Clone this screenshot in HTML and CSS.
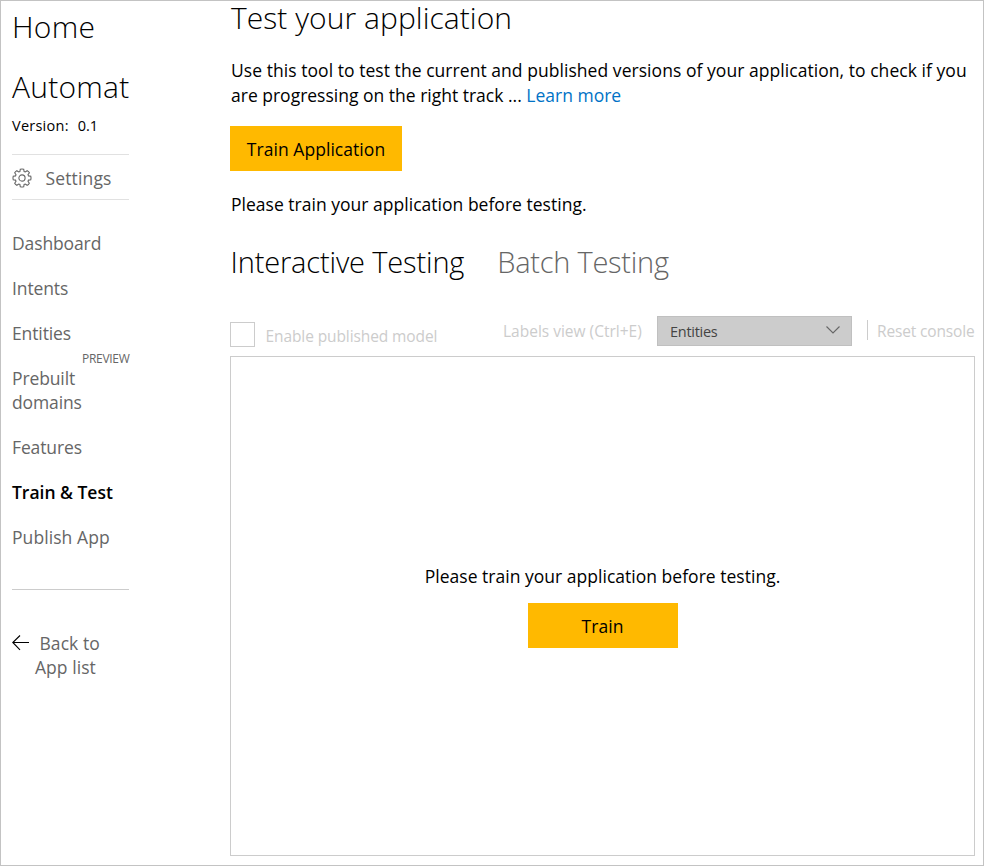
FILE: index.html
```html
<!DOCTYPE html>
<html lang="en">
<head>
<meta charset="utf-8">
<title>Train &amp; Test</title>
<link rel="stylesheet" href="styles.css">
</head>
<body>
<div class="app">
  <aside class="sidebar">
    <h1 class="app-name"><span>Home</span><br><span>Automat</span></h1>
    <p class="version"><span>Version:</span><span class="number">0.1</span></p>
    <a class="settings">
      <svg class="gear" viewBox="0 0 20 20" width="20" height="20"><path d="M8.300 1.200Q10 .7 11.700 1.200L12.100 3.500 13.300 4 15.200 2.700Q16.700 3.500 17.400 4.800L16 6.700 16.500 7.900 18.800 8.300Q19.300 10 18.800 11.700L16.500 12.100 16 13.300 17.300 15.200Q16.500 16.700 15.200 17.300L13.300 16 12.100 16.500 11.700 18.800Q10 19.300 8.300 18.800L7.900 16.500 6.700 16 4.800 17.300Q3.300 16.500 2.700 15.200L4 13.300 3.500 12.100 1.200 11.700Q.7 10 1.200 8.300L3.500 7.900 4 6.700 2.700 4.800Q3.500 3.300 4.800 2.700L6.700 4 7.900 3.500z"/><circle cx="10" cy="10" r="3.100"/></svg>
      <span>Settings</span>
    </a>
    <nav class="nav">
      <a><span>Dashboard</span></a>
      <a><span>Intents</span></a>
      <a><span>Entities</span></a>
      <a class="with-tag"><span>Prebuilt<br>domains</span><em class="tag">PREVIEW</em></a>
      <a><span>Features</span></a>
      <a class="active"><span>Train &amp; Test</span></a>
      <a class="publish"><span>Publish App</span></a>
    </nav>
    <a class="back">
      <svg viewBox="0 0 18 16" width="18" height="16"><path d="M17 7.500H.8M8 .5l-7.200 7L8 14.800"/></svg>
      <span><span class="indent">Back to</span><br>App list</span>
    </a>
  </aside>
  <main class="main">
    <h2 class="title"><span>Test your application</span></h2>
    <p class="intro"><span>Use this tool to test the current and published versions of your application, to check if you</span><br><span class="second">are progressing on the right track ... <a class="link">Learn more</a></span></p>
    <button class="btn train-app"><span>Train Application</span></button>
    <p class="notice"><span>Please train your application before testing.</span></p>
    <div class="tabs">
      <span class="current">Interactive Testing</span>
      <span class="batch">Batch Testing</span>
    </div>
    <div class="toolbar">
      <label class="check"><i class="box"></i><span class="check-text">Enable published model</span></label>
      <span class="labels-view">Labels view (Ctrl+E)</span>
      <div class="select"><span>Entities</span><svg viewBox="0 0 14 8" width="14" height="8"><path d="M.5.5l6.500 6.500 6.500-6.500"/></svg></div>
      <span class="reset"><span>Reset console</span></span>
    </div>
    <section class="console">
      <p class="console-msg"><span>Please train your application before testing.</span></p>
      <button class="btn train"><span>Train</span></button>
    </section>
  </main>
</div>
</body>
</html>
```
FILE: styles.css
```css
* { box-sizing: border-box; }
body {
  margin: 0;
  font-family: "Open Sans", "Noto Sans", sans-serif;
  font-size: 17.5px;
  letter-spacing: 0.05px;
  color: #000;
  background: #fff;
}
h1, h2, p { margin: 0; font-weight: 400; }
span { white-space: nowrap; }

.app {
  display: flex;
  width: 984px;
  height: 866px;
  border: 1px solid #c3c3c3;
}

.sidebar {
  width: 117px;
  margin-left: 11px;
  flex: none;
  color: #666;
}
.app-name {
  height: 116px;
  margin-top: -4px;
  font-size: 30px;
  font-weight: 300;
  line-height: 60px;
  letter-spacing: 0.25px;
  color: #000;
}
.version {
  display: flex;
  gap: 9px;
  height: 37px;
  margin-top: 4px;
  line-height: 17px;
  font-size: 14.5px;
  letter-spacing: 0.25px;
  color: #000;
}
.version .number { letter-spacing: 0; }
.settings {
  display: flex;
  align-items: center;
  gap: 14px;
  height: 46px;
  padding-top: 2px;
  border-top: 1px solid #e1e1e1;
  border-bottom: 1px solid #e1e1e1;
  letter-spacing: 0.15px;
}
.gear { flex: none; margin-left: -0.5px; fill: none; stroke: #666; stroke-width: 1.1; }

.nav {
  display: flex;
  flex-direction: column;
  gap: 21px;
  padding-top: 31px;
  height: 390px;
  border-bottom: 1px solid #ccc;
  line-height: 24px;
  letter-spacing: -0.12px;
}
.with-tag { position: relative; }
.tag {
  position: absolute;
  top: -19px;
  left: 70px;
  font-size: 12px;
  font-style: normal;
  letter-spacing: -0.3px;
}
.active { color: #000; font-weight: 600; letter-spacing: -0.02px; }
.publish { letter-spacing: 0.08px; }
.back {
  display: flex;
  gap: 5px;
  padding-top: 41px;
  line-height: 24px;
}
.back svg { flex: none; margin-top: 4px; fill: none; stroke: #000; stroke-width: 1.1; }
.indent { margin-left: 4.5px; }

.main {
  width: 745px;
  margin-left: 101px;
  flex: none;
}
.title {
  height: 57px;
  padding-left: 1px;
  line-height: 34px;
  font-size: 30px;
  font-weight: 300;
}
.intro { height: 68px; padding-left: 1px; line-height: 25px; }
.second { letter-spacing: 0; }
.link { color: #0072c6; }
.btn {
  display: block;
  height: 45px;
  padding: 0;
  border: 0;
  background: #ffb900;
  color: #000;
  font: inherit;
  letter-spacing: 0.05px;
}
.train-app { width: 172px; }
.notice { padding: 21px 0 0 1px; height: 75px; line-height: 25px; letter-spacing: 0.02px; }
.tabs {
  display: flex;
  gap: 33px;
  height: 70px;
  padding-left: 0.5px;
  line-height: 32px;
  font-size: 29px;
  font-weight: 300;
}
.current { letter-spacing: -0.15px; }
.batch { color: #666; letter-spacing: -0.25px; }
.toolbar {
  display: flex;
  align-items: flex-start;
  height: 40px;
  font-size: 15.5px;
  line-height: 30px;
  color: #ccc;
}
.check { display: flex; gap: 10.5px; width: 273px; padding-top: 6px; letter-spacing: -0.1px; }
.check-text { margin-top: -1px; }
.box { width: 25px; height: 25px; border: 1px solid #ccc; }
.labels-view { width: 154px; letter-spacing: 0; }
.select {
  display: flex;
  align-items: center;
  justify-content: space-between;
  width: 195px;
  height: 30px;
  padding: 2px 11px 0 12px;
  border: 1px solid #c0c0c0;
  background: #ccc;
  color: #444;
  font-size: 14.5px;
  letter-spacing: -0.27px;
}
.select svg { fill: none; stroke: #666; stroke-width: 1.1; margin-top: -5px; }
.reset {
  margin: 4px 0 0 15px;
  height: 20px;
  line-height: 22px;
  padding-left: 9px;
  border-left: 1px solid #ccc;
  letter-spacing: -0.15px;
}
.console {
  display: flex;
  flex-direction: column;
  align-items: center;
  height: 500px;
  padding-top: 207px;
  border: 1px solid #ccc;
}
.console-msg { height: 39px; line-height: 25px; letter-spacing: 0.02px; }
.train { width: 150px; }
```
